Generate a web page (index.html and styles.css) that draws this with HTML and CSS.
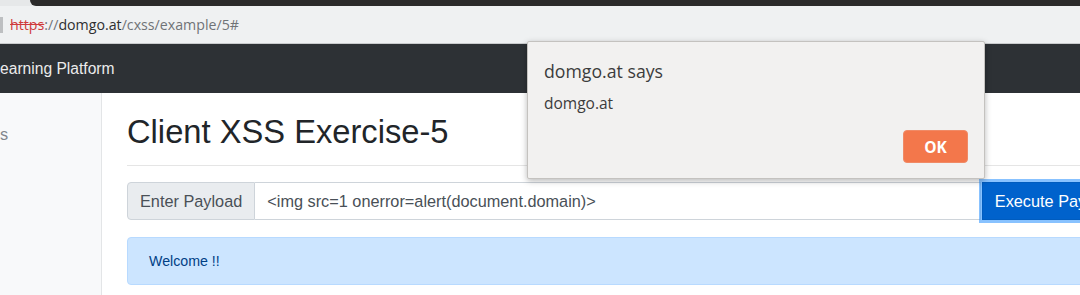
FILE: index.html
```html
<!DOCTYPE html>
<html lang="en">
<head>
<meta charset="utf-8">
<title>Client XSS Exercise-5</title>
<link rel="stylesheet" href="styles.css">
</head>
<body>
<div class="chrome">
  <div class="tabstrip"><div class="tab"></div></div>
  <div class="urlbar">
    <span class="sep"></span>
    <span class="url"><span class="scheme">https</span><span class="dim">://</span><span class="host">domgo.at</span><span class="dim">/cxss/example/5#</span></span>
  </div>
</div>
<div class="page">
  <nav class="navbar"><span class="brand">Learning Platform</span></nav>
  <div class="layout">
    <aside class="sidebar"><span class="side-link">s</span></aside>
    <main class="main">
      <h1 class="title">Client XSS Exercise-5</h1>
      <hr class="rule">
      <div class="input-group">
        <span class="prepend">Enter Payload</span>
        <input class="field" type="text" value="<img src=1 onerror=alert(document.domain)>">
        <button class="btn" type="button">Execute Payload</button>
      </div>
      <div class="alert">Welcome !!</div>
    </main>
  </div>
</div>
<div class="dialog">
  <div class="dlg-title">domgo.at says</div>
  <div class="dlg-msg">domgo.at</div>
  <div class="dlg-actions"><button class="ok" type="button">OK</button></div>
</div>
</body>
</html>
```
FILE: styles.css
```css
html, body {
  margin: 0;
  padding: 0;
}
body {
  width: 1080px;
  height: 295px;
  overflow: hidden;
  position: relative;
  background: #ffffff;
  font-family: "Liberation Sans", Arial, sans-serif;
}
.chrome {
  font-family: "Open Sans", "Noto Sans", sans-serif;
}
.tabstrip {
  height: 6px;
  background: #e6e8e9;
}
.tab {
  margin-left: 30px;
  height: 6px;
  background: #2b2b2b;
  border-bottom-left-radius: 6px;
}
.urlbar {
  height: 37px;
  background: #eff1f2;
  border-bottom: 1px solid #c9cbcd;
  display: flex;
  align-items: center;
}
.sep {
  width: 3px;
  height: 16px;
  background: #bdbfc1;
}
.url {
  margin-left: 7px;
  font-size: 14.2px;
  line-height: 37px;
  color: #7a7d80;
}
.scheme {
  color: #cf3a3b;
  text-decoration: line-through;
}
.dim {
  color: #6f7377;
}
.host {
  color: #2e2f30;
}
.page {
  width: 1300px;
}
.navbar {
  height: 49px;
  background: #2d3135;
  display: flex;
  align-items: center;
}
.brand {
  margin-left: -8.6px;
  font-size: 15.6px;
  color: #ebebeb;
}
.layout {
  display: flex;
  height: 210px;
}
.sidebar {
  width: 102px;
  flex: none;
  background: #f8f9fa;
  border-right: 1px solid #e3e5e7;
  padding-top: 29px;
  box-sizing: border-box;
  font-size: 16.3px;
  line-height: 24px;
}
.side-link {
  color: #80868c;
}
.main {
  flex: none;
  width: 1003px;
  padding-left: 25px;
}
.title {
  margin: 20px 0 14px;
  font-size: 32.7px;
  line-height: 38.4px;
  font-weight: 400;
  color: #212529;
}
.rule {
  margin: 0 0 16px;
  border: 0;
  border-top: 1px solid #e5e5e5;
  width: 1200px;
}
.input-group {
  display: flex;
  height: 38px;
}
.prepend {
  padding: 6px 12px;
  font-size: 16.3px;
  line-height: 24px;
  color: #495057;
  background: #e9ecef;
  border: 1px solid #ced4da;
  border-radius: 4px 0 0 4px;
}
.field {
  flex: 1;
  min-width: 0;
  margin: 0;
  padding: 6px 12px;
  font-family: "Liberation Sans", Arial, sans-serif;
  font-size: 16.3px;
  line-height: 24px;
  color: #495057;
  background: #ffffff;
  border: 1px solid #ced4da;
  border-left: 0;
  outline: none;
}
.btn {
  margin: 0 0 0 1px;
  padding: 6px 12px;
  font-family: "Liberation Sans", Arial, sans-serif;
  font-size: 16.3px;
  line-height: 24px;
  color: #ffffff;
  background: #0062cc;
  border: 1px solid #005cbf;
  box-shadow: 0 0 0 3px rgba(38, 143, 255, 0.55);
}
.alert {
  margin-top: 17px;
  width: 1200px;
  padding: 12px 21px;
  font-size: 14.2px;
  line-height: 22px;
  color: #004085;
  background: #cce5ff;
  border: 1px solid #b8daff;
  border-radius: 4px;
}
.dialog {
  position: absolute;
  left: 527px;
  top: 41px;
  width: 424px;
  padding: 17px 16px 15px;
  background: #f2f1f0;
  border: 1px solid #c4c2bf;
  border-radius: 2px;
  box-shadow: 0 2px 6px rgba(0, 0, 0, 0.28);
  font-family: "Open Sans", "Noto Sans", sans-serif;
  color: #3c3c3c;
}
.dlg-title {
  font-size: 17.7px;
  line-height: 24px;
}
.dlg-msg {
  margin-top: 9px;
  font-size: 15.5px;
  line-height: 22px;
}
.dlg-actions {
  margin-top: 16px;
  display: flex;
  justify-content: flex-end;
}
.ok {
  width: 65px;
  height: 33px;
  padding: 0;
  font-family: "Open Sans", "Noto Sans", sans-serif;
  font-size: 15.5px;
  font-weight: 700;
  color: #ffffff;
  background: #f3774b;
  border: 1px solid #f08a66;
  border-radius: 4px;
}
```
